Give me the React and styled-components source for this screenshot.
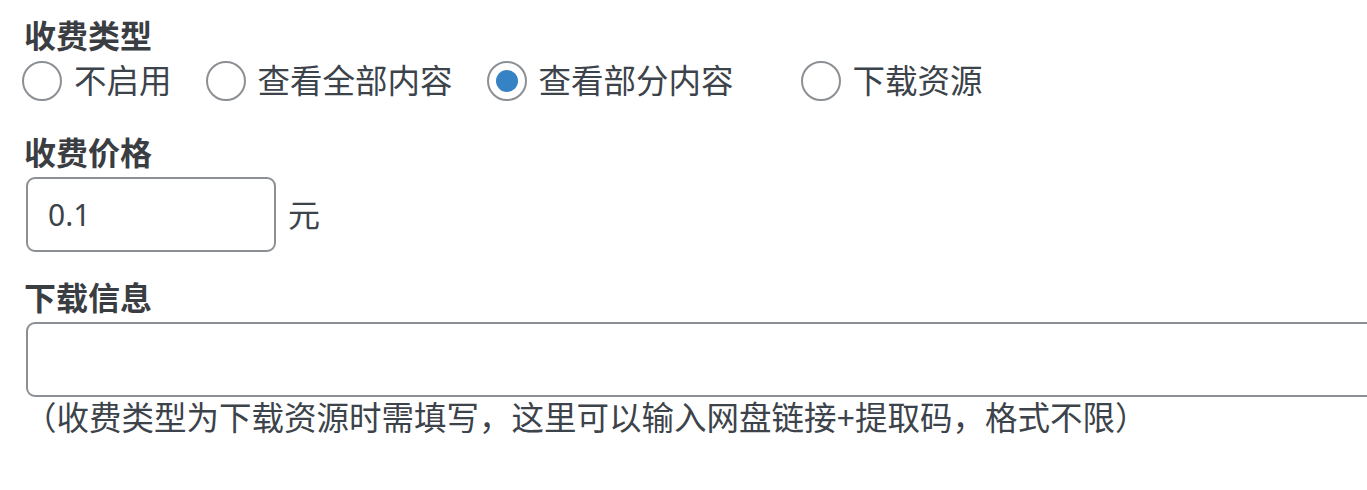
import React, { useState } from "react";
import styled, { createGlobalStyle } from "styled-components";

const GlobalStyle = createGlobalStyle`
  html, body {
    margin: 0;
    padding: 0;
    background: #fff;
    overflow: hidden;
  }
  body {
    font-family: "Noto Sans", "Noto Sans CJK SC", sans-serif;
    color: #3c434a;
  }
`;

const Form = styled.div`
  display: flex;
  flex-direction: column;
  padding: 18px 0 0 24px;
`;

const Field = styled.div`
  display: flex;
  flex-direction: column;
  gap: ${(p) => p.$gap || "6px"};
  margin-top: ${(p) => p.$top || "0"};
`;

const Label = styled.div`
  font-size: 32px;
  line-height: 36px;
  font-weight: 700;
  color: #3a3d42;
`;

const RadioRow = styled.div`
  display: flex;
  align-items: center;
  height: 44px;
`;

const Option = styled.label`
  display: flex;
  align-items: center;
  gap: 12px;
  margin-right: ${(p) => (p.$wide ? "69px" : "36px")};
  font-size: 32.5px;
  line-height: 36px;
  color: #3c434a;
  cursor: pointer;
`;

const Radio = styled.span`
  box-sizing: border-box;
  width: 40px;
  height: 40px;
  border-radius: 50%;
  border: 2px solid #8c8f94;
  display: flex;
  align-items: center;
  justify-content: center;
  margin-left: -2px;

  &::after {
    content: "";
    width: 22px;
    height: 22px;
    border-radius: 50%;
    background: ${(p) => (p.$checked ? "#3582c4" : "transparent")};
  }
`;

const PriceRow = styled.div`
  display: flex;
  align-items: center;
  gap: 12px;
`;

const TextBox = styled.input`
  box-sizing: border-box;
  width: ${(p) => p.$width};
  height: 75px;
  margin: 0 0 0 2px;
  padding: 0 20px;
  border: 2px solid #8c8f94;
  border-radius: 9px;
  font-family: "Noto Sans", "Noto Sans CJK SC", sans-serif;
  font-size: 30px;
  color: #3c434a;
  background: #fff;
  outline: none;
`;

const Unit = styled.span`
  font-size: 32px;
  line-height: 36px;
`;

const Hint = styled.div`
  font-size: 32.5px;
  line-height: 36px;
  margin-top: -3px;
  color: #3c434a;
`;

const options = [
  { key: "none", text: "不启用" },
  { key: "all", text: "查看全部内容" },
  { key: "part", text: "查看部分内容", wide: true },
  { key: "down", text: "下载资源" },
];

export default function App() {
  const [type, setType] = useState("part");
  const [price, setPrice] = useState("0.1");
  const [info, setInfo] = useState("");

  return (
    <>
      <GlobalStyle />
      <Form>
        <Field $gap="5px">
          <Label>收费类型</Label>
          <RadioRow>
            {options.map((o) => (
              <Option key={o.key} $wide={o.wide} onClick={() => setType(o.key)}>
                <Radio $checked={type === o.key} />
                {o.text}
              </Option>
            ))}
          </RadioRow>
        </Field>
        <Field $top="32px">
          <Label>收费价格</Label>
          <PriceRow>
            <TextBox
              $width="250px"
              value={price}
              onChange={(e) => setPrice(e.target.value)}
            />
            <Unit>元</Unit>
          </PriceRow>
        </Field>
        <Field $top="28px">
          <Label>下载信息</Label>
          <TextBox
            $width="1400px"
            value={info}
            onChange={(e) => setInfo(e.target.value)}
          />
          <Hint>（收费类型为下载资源时需填写，这里可以输入网盘链接+提取码，格式不限）</Hint>
        </Field>
      </Form>
    </>
  );
}
